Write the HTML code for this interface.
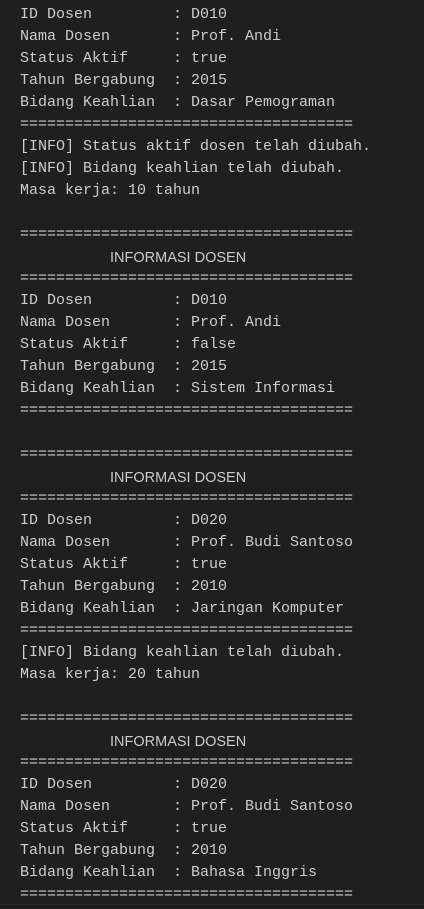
<!DOCTYPE html>
<html><head><meta charset="utf-8"><style>
html,body{margin:0;padding:0;background:#1f1f1f;}
body{width:424px;height:909px;overflow:hidden;position:relative;}
pre{margin:0;position:absolute;left:20px;top:4px;font-family:"Liberation Mono",monospace;font-size:15px;line-height:22px;color:#cccccc;white-space:pre;}
.h{font-family:"Liberation Sans",sans-serif;font-size:14.5px;display:inline-block;height:22px;line-height:22px;vertical-align:top;position:relative;top:1px;}
.b{position:absolute;left:0;right:0;top:904px;height:1px;background:#2b2b2b;}
</style></head><body>
<pre>ID Dosen         : D010
Nama Dosen       : Prof. Andi
Status Aktif     : true
Tahun Bergabung  : 2015
Bidang Keahlian  : Dasar Pemograman
=====================================
[INFO] Status aktif dosen telah diubah.
[INFO] Bidang keahlian telah diubah.
Masa kerja: 10 tahun

=====================================
          <span class="h">INFORMASI DOSEN</span>
=====================================
ID Dosen         : D010
Nama Dosen       : Prof. Andi
Status Aktif     : false
Tahun Bergabung  : 2015
Bidang Keahlian  : Sistem Informasi
=====================================

=====================================
          <span class="h">INFORMASI DOSEN</span>
=====================================
ID Dosen         : D020
Nama Dosen       : Prof. Budi Santoso
Status Aktif     : true
Tahun Bergabung  : 2010
Bidang Keahlian  : Jaringan Komputer
=====================================
[INFO] Bidang keahlian telah diubah.
Masa kerja: 20 tahun

=====================================
          <span class="h">INFORMASI DOSEN</span>
=====================================
ID Dosen         : D020
Nama Dosen       : Prof. Budi Santoso
Status Aktif     : true
Tahun Bergabung  : 2010
Bidang Keahlian  : Bahasa Inggris
=====================================</pre>
<div class="b"></div>
</body></html>
